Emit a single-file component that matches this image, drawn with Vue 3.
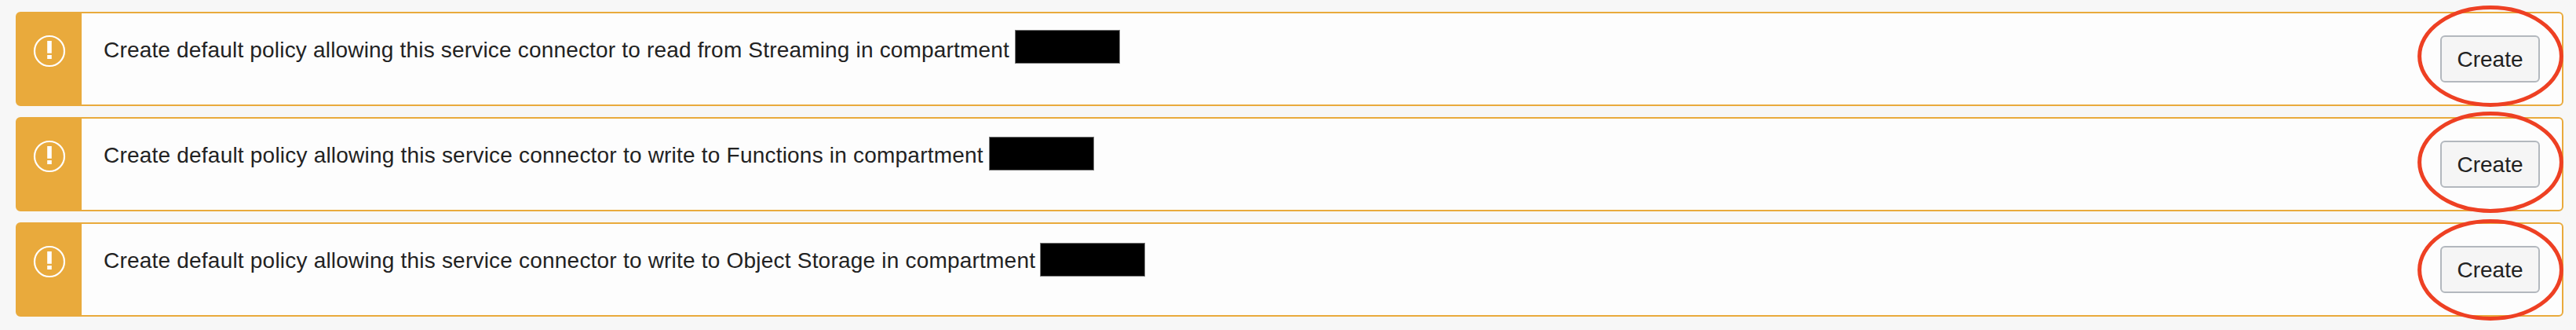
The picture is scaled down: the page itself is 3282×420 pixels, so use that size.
<script setup>
const banners = [
  { id: 'streaming', text: 'Create default policy allowing this service connector to read from Streaming in compartment' },
  { id: 'functions', text: 'Create default policy allowing this service connector to write to Functions in compartment' },
  { id: 'storage', text: 'Create default policy allowing this service connector to write to Object Storage in compartment' },
]
</script>

<template>
  <main class="page">
    <section v-for="b in banners" :key="b.id" class="banner" :class="b.id">
      <div class="stripe">
        <svg width="42" height="42" viewBox="0 0 42 42">
          <circle cx="21" cy="21" r="19" fill="none" stroke="#fff" stroke-width="2.2" />
          <path d="M18.2 8h5.6v15.7h-5.6zM18.2 26h5.6v5h-5.6z" fill="#fff" />
        </svg>
      </div>
      <p class="message">{{ b.text }}</p>
      <span class="redacted"></span>
      <div class="action">
        <button class="create" type="button">Create</button>
        <svg class="ring" viewBox="0 0 186 129" preserveAspectRatio="none">
          <ellipse cx="93" cy="64.5" rx="90.4" ry="61.9" fill="none" stroke="#ee4023" stroke-width="5" />
        </svg>
      </div>
    </section>
  </main>
</template>

<style>
body { background: #f7f7f7; }
</style>

<style scoped>
.page {
  box-sizing: border-box;
  height: 420px;
  padding: 15px 16px 0 20px;
  display: flex;
  flex-direction: column;
  gap: 14px;
  background: #f7f7f7;
  font-family: "Liberation Sans", Arial, sans-serif;
  font-size: 28px;
  color: #222;
}
.banner {
  box-sizing: border-box;
  height: 120px;
  display: flex;
  align-items: flex-start;
  border: 2px solid #e9aa3c;
  border-radius: 6px;
  background: #fdfdfd;
}
.stripe {
  flex: none;
  box-sizing: border-box;
  width: 82px;
  height: 116px;
  padding: 27px 0 0 20px;
  background: #e9aa3c;
}
.stripe svg { display: block; }
.message {
  flex: none;
  margin: 0 0 0 28px;
  padding-top: 29px;
  line-height: 36px;
  white-space: nowrap;
}
.streaming .message { width: 1161px; letter-spacing: 0.18px; }
.functions .message { width: 1128px; letter-spacing: 0.21px; }
.storage .message { width: 1193px; letter-spacing: 0.21px; }
.redacted {
  flex: none;
  box-sizing: border-box;
  width: 134px;
  height: 43px;
  background: #000;
  border: 1px solid #777;
}
.streaming .redacted { margin-top: 21px; }
.functions .redacted { margin-top: 23px; }
.storage .redacted { margin-top: 24px; }
.action {
  position: relative;
  margin: 28px 28px 0 auto;
  width: 127px;
  height: 60px;
}
.create {
  box-sizing: border-box;
  width: 127px;
  height: 60px;
  display: block;
  padding: 1px 0 0;
  border: 2px solid #b3b8be;
  border-radius: 6px;
  background: #f5f5f5;
  color: #222;
  font: inherit;
}
.ring {
  position: absolute;
  left: -29px;
  top: -38.5px;
  width: 186px;
  height: 129px;
  pointer-events: none;
}
.functions .ring { top: -37.5px; }
.storage .ring { top: -34.5px; }
</style>
